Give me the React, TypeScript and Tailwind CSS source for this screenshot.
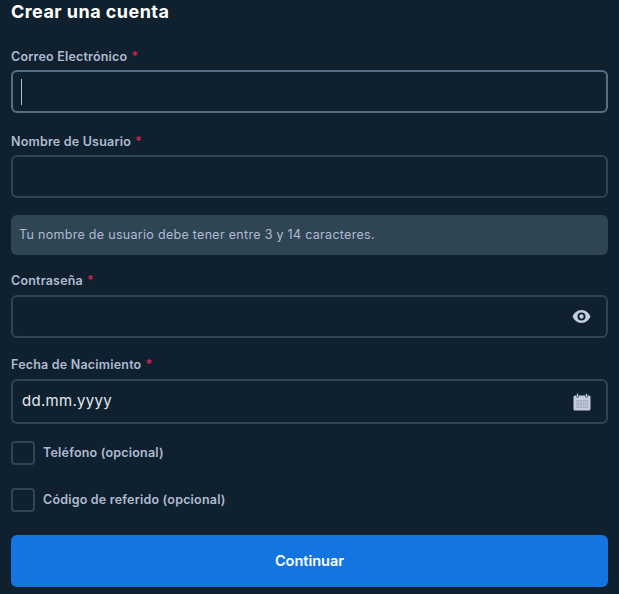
import type { ReactNode } from 'react'

const font = "font-['Inter','Noto_Sans',sans-serif]"

function Label({ children }: { children: ReactNode }) {
  return (
    <div className="flex h-[16px] items-center text-[12.500px] leading-none font-semibold tracking-[0.2px] text-[#b1bad3]">
      <span>{children}</span>
      <span className="ml-[4px] text-[#d3264f]">*</span>
    </div>
  )
}

function EyeIcon() {
  return (
    <svg viewBox="0 0 20 14" className="h-[13px] w-[19px]">
      <path
        fillRule="evenodd"
        fill="#c5cde0"
        d="M10 0c4.600 0 8.200 3.400 9.600 7-1.400 3.600-5 7-9.600 7S1.800 10.600.4 7C1.800 3.400 5.400 0 10 0Zm0 2.700a4.300 4.300 0 1 0 0 8.600 4.300 4.300 0 0 0 0-8.600Zm0 2a2.300 2.300 0 1 1 0 4.600 2.300 2.300 0 0 1 0-4.600Z"
      />
    </svg>
  )
}

function CalendarIcon() {
  return (
    <svg viewBox="0 0 18 18" className="size-[18px]">
      <rect x="0.500" y="2.500" width="17" height="15" rx="1.500" fill="#c5cde0" />
      <rect x="3.500" y="0.500" width="2" height="4" rx="1" fill="#c5cde0" stroke="#0f212e" strokeWidth="0.600" />
      <rect x="12.500" y="0.500" width="2" height="4" rx="1" fill="#c5cde0" stroke="#0f212e" strokeWidth="0.600" />
      <path
        d="M3 8h12M3 11h12M3 14h12M5 7v8.500M8 7v8.500M11 7v8.500M14 7v8.500"
        stroke="#8d97ae"
        strokeWidth="1"
        strokeDasharray="1.200 1"
        fill="none"
      />
    </svg>
  )
}

export default function App() {
  return (
    <div className={`${font} h-[594px] w-[619px] overflow-hidden bg-[#0f212e] pt-[2px] pr-[11px] pl-[11px]`}>
      <h1 className="h-[20px] text-[18px] leading-[20px] font-bold tracking-[0.45px] text-white">
        Crear una cuenta
      </h1>

      <div className="mt-[27px]">
        <Label>Correo Electrónico</Label>
        <div className="mt-[5px] flex h-[43px] items-center rounded-[6px] border-2 border-[#557086] bg-[#0f212e] pl-[8px]">
          <div className="h-[26px] w-[1px] bg-[#b1bad3]" />
        </div>
      </div>

      <div className="mt-[21px]">
        <Label>Nombre de Usuario</Label>
        <div className="mt-[5px] h-[43px] rounded-[6px] border-2 border-[#2f4553]" />
      </div>

      <div className="mt-[17px] flex h-[40px] items-center rounded-[6px] bg-[#2f4553] pr-[9px] pl-[8px] text-[12.500px] tracking-[0.3px] text-[#b1bad3]">
        Tu nombre de usuario debe tener entre 3 y 14 caracteres.
      </div>

      <div className="mt-[18px]">
        <Label>Contraseña</Label>
        <div className="mt-[6px] flex h-[43px] items-center justify-end rounded-[6px] border-2 border-[#2f4553] pr-[15px]">
          <EyeIcon />
        </div>
      </div>

      <div className="mt-[19px]">
        <Label>Fecha de Nacimiento</Label>
        <div className="mt-[6px] flex h-[45px] items-center justify-between rounded-[6px] border-2 border-[#2f4553] pr-[15px] pl-[9px]">
          <span className="text-[15px] tracking-[0.3px] text-[#e3e8f2]">dd.mm.yyyy</span>
          <CalendarIcon />
        </div>
      </div>

      <div className="mt-[17px] flex h-[24px] items-center gap-[8px]">
        <div className="size-[24px] rounded-[4px] border-2 border-[#2f4553]" />
        <span className="text-[12.500px] font-semibold tracking-[0.2px] text-[#b1bad3]">Teléfono (opcional)</span>
      </div>

      <div className="mt-[23px] flex h-[24px] items-center gap-[8px]">
        <div className="size-[24px] rounded-[4px] border-2 border-[#2f4553]" />
        <span className="text-[12.500px] font-semibold tracking-[0.2px] text-[#b1bad3]">Código de referido (opcional)</span>
      </div>

      <button className="mt-[23px] flex h-[52px] w-full items-center justify-center rounded-[6px] bg-[#1475e1] text-[14.500px] font-semibold text-white">
        Continuar
      </button>
    </div>
  )
}
